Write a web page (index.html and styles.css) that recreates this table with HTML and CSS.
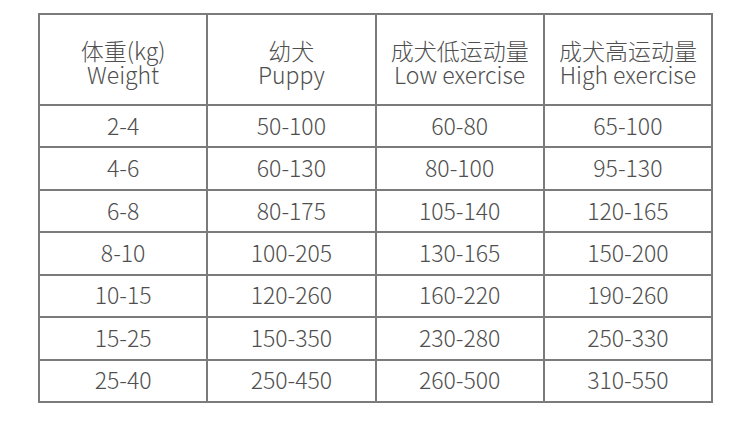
FILE: index.html
```html
<!DOCTYPE html>
<html lang="zh">
<head>
<meta charset="utf-8">
<link rel="stylesheet" href="styles.css">
</head>
<body>
<div class="page">
  <div class="grid">
    <div class="cell head">体重(kg)<br>Weight</div>
    <div class="cell head">幼犬<br>Puppy</div>
    <div class="cell head">成犬低运动量<br>Low exercise</div>
    <div class="cell head">成犬高运动量<br>High exercise</div>

    <div class="cell">2-4</div><div class="cell">50-100</div><div class="cell">60-80</div><div class="cell">65-100</div>
    <div class="cell">4-6</div><div class="cell">60-130</div><div class="cell">80-100</div><div class="cell">95-130</div>
    <div class="cell">6-8</div><div class="cell">80-175</div><div class="cell">105-140</div><div class="cell">120-165</div>
    <div class="cell">8-10</div><div class="cell">100-205</div><div class="cell">130-165</div><div class="cell">150-200</div>
    <div class="cell">10-15</div><div class="cell">120-260</div><div class="cell">160-220</div><div class="cell">190-260</div>
    <div class="cell">15-25</div><div class="cell">150-350</div><div class="cell">230-280</div><div class="cell">250-330</div>
    <div class="cell">25-40</div><div class="cell">250-450</div><div class="cell">260-500</div><div class="cell">310-550</div>
  </div>
</div>
</body>
</html>
```
FILE: styles.css
```css
html, body {
  margin: 0;
  padding: 0;
  background: #ffffff;
}
.page {
  width: 750px;
  height: 423px;
  padding: 13px 0 0 38px;
  box-sizing: border-box;
}
.grid {
  width: 675px;
  height: 390px;
  box-sizing: border-box;
  padding: 2px;
  gap: 2px;
  background: #7b7b7b;
  display: grid;
  grid-template-columns: repeat(4, 1fr);
  grid-template-rows: 89px repeat(7, 1fr);
}
.cell {
  background: #ffffff;
  display: flex;
  align-items: center;
  justify-content: center;
  text-align: center;
  font-family: "Noto Sans CJK SC", "Noto Sans", sans-serif;
  font-weight: 300;
  font-size: 23px;
  color: #4f4f4f;
  line-height: 24px;
  padding-bottom: 3px;
  box-sizing: border-box;
}
.head {
  padding-bottom: 0;
  padding-top: 5px;
}
```
